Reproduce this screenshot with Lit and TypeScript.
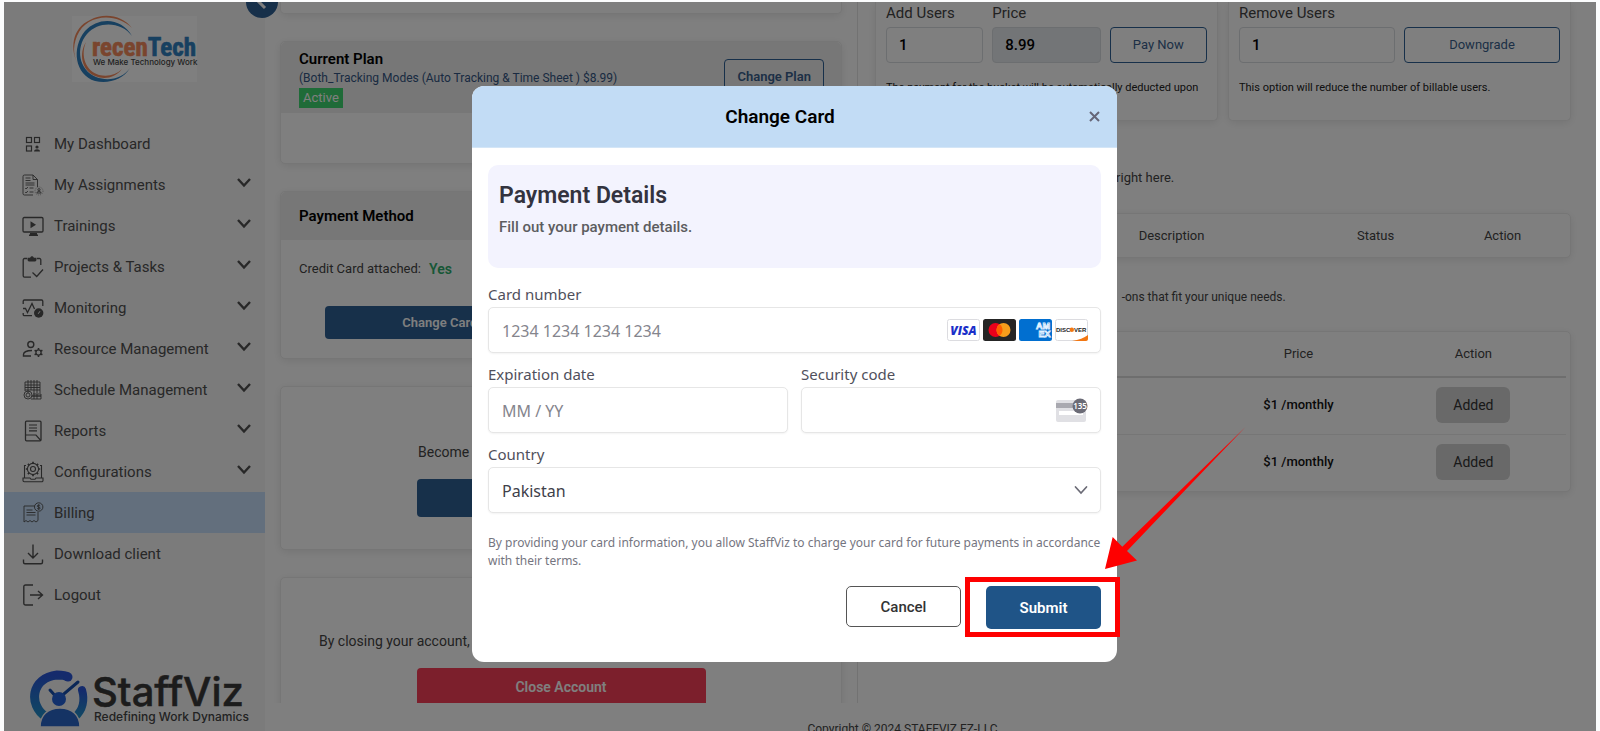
import { LitElement, html, css, svg, nothing } from "lit";
import { customElement, property } from "lit/decorators.js";

/* Sidebar glyphs, drawn on a 22 x 22 grid. */
const icons: Record<string, unknown> = {
  dashboard: svg`<g stroke-width="1.2"><rect x="4.5" y="4.5" width="5" height="5"/><rect x="12.5" y="4.5" width="5" height="5"/><rect x="4.5" y="13" width="5" height="5"/></g><circle cx="15" cy="14" r="1.6" fill="currentColor" stroke="none"/><path d="M12 18.5c0-3 6-3 6 0z" fill="currentColor" stroke="none"/>`,
  assignments: svg`<g stroke-width=".9"><path d="M11 21H2.5A1.5 1.5 0 0 1 1 19.500V2.500A1.500 1.500 0 0 1 2.500 1H11l4.500 4.500V13M11 1v4.500h4.500M3.500 4h5M3.500 6.500h5M3.500 9h9M3.500 11h9M7.500 14h4M7.500 18h4M3.200 14l1 1 1.600-2M3.200 18l1 1 1.600-2"/><circle cx="17" cy="17" r="4" stroke-dasharray="1 1" stroke-width=".5"/><circle cx="17" cy="15.700" r="1.100"/><path d="M14.800 19c.3-2 4.100-2 4.400 0z"/></g>`,
  trainings: svg`<rect x="1" y="2.500" width="20" height="14.500" rx="1.200" stroke-width="1.300"/><path d="M8.500 6.300v7l5.500-3.500z" fill="currentColor" stroke="none"/><path d="M8 18h7v1.500h1V21H7v-1.500h1z" fill="currentColor" stroke="none"/>`,
  projects: svg`<path d="M5 2.500H2.500A1.300 1.300 0 0 0 1.200 3.800v16a1.300 1.300 0 0 0 1.300 1.300H9M15 2.500h2.500a1.300 1.300 0 0 1 1.300 1.300V9M10.500 16.500l4.200 4 6.300-7" stroke-width="1.300"/><path d="M5.500 1.800h2.700c.4-2 3.200-2 3.600 0h2.700v1.700c0 1.600-1 2-2 2H7.500c-1 0-2-.6-2-2z" fill="currentColor" stroke="none"/>`,
  monitoring: svg`<path d="M1.200 7V4.200A1.200 1.200 0 0 1 2.400 3h17.200a1.200 1.200 0 0 1 1.200 1.200V9M1.200 16v1.500a1.200 1.200 0 0 0 1.200 1.200H10M1 11.500h2.500l2 4L10 6.500l2.500 5.500" stroke-width="1.300"/><circle cx="16.700" cy="16" r="4.700" fill="currentColor" stroke="none"/><path d="M16.200 16.800l1.800-2.600" stroke="#f7f7f7" stroke-width="1"/>`,
  resource: svg`<circle cx="8.800" cy="6.500" r="3" stroke-width="1.400"/><path d="M10 12.500c-5 0-8.500 1.500-8.500 4V18H9" stroke-width="1.400"/><circle cx="16.500" cy="14.500" r="2.600" stroke-width="1.300"/><path d="M16.500 10v1.800M16.500 17.200V19M12.600 12.200l1.600.9M18.800 15.900l1.600.9M12.600 16.800l1.600-.9M18.800 13.100l1.600-.9" stroke-width="1.600"/>`,
  schedule: svg`<g stroke-width=".9"><path d="M3 3h15v11M3 3v9M3 6h15M3 8.500h15M3 11h15M6 1v13M9 1v10M12 1v13M15 1v13"/><circle cx="6" cy="16" r="4"/><circle cx="6" cy="16" r="2"/><path d="M11 15l8 0v2h-9M10 17h9v3H9M12 14v6M15 15v5"/></g>`,
  reports: svg`<rect x="3.500" y="1.200" width="15.500" height="19.600" rx="1" stroke-width="1.300"/><path d="M7 5h8M7 8h8M7 10.800h8M3.500 15h10.500l4.800 5.500" stroke-width="1.200"/>`,
  configurations: svg`<g stroke-width="1.100"><path d="M4 4.500H2.500v12M18 4.500h1.500v12M1 17h7l1 1.300h4l1-1.300h7v2.500a1.200 1.200 0 0 1-1.200 1.200H2.200A1.200 1.200 0 0 1 1 19.500z"/><circle cx="11" cy="8" r="2.500"/><circle cx="11" cy="8" r="5.600"/><path d="M11 .8v2M11 13.200v2M3.800 8h2M16.200 8h2M5.900 2.900l1.400 1.400M14.700 11.700l1.400 1.400M16.100 2.900l-1.400 1.400M7.300 11.700l-1.400 1.400" stroke-width="1.700"/></g>`,
  billing: svg`<g stroke-width=".9"><path d="M13 4H2v16l2-1.500L6 20l2-1.500L10 20l2-1.500L14 20l2-1.500V10M4.500 8h6M4.500 10.500h9M4.500 13h9"/><circle cx="16.700" cy="5" r="4.200"/><path d="M18.200 3.800c-.6-1-3-.8-3 .3 0 1.200 3 .7 3 2 0 1.200-2.400 1.300-3 .2M16.700 2.300v5.500"/></g>`,
  download: svg`<path d="M11 1.500v13M6 10l5 5 5-5M1.500 16.500v2.700a1.500 1.500 0 0 0 1.500 1.500h16a1.500 1.500 0 0 0 1.500-1.500v-2.700" stroke-width="1.400"/>`,
  logout: svg`<path d="M11 1H3.500a1.700 1.700 0 0 0-1.700 1.700v16.600a1.700 1.700 0 0 0 1.700 1.700H11M8 11h12.500M16 7l4.500 4L16 15" stroke-width="1.400"/>`,
};

interface NavEntry {
  icon: string;
  label: string;
  expandable?: boolean;
  active?: boolean;
}

const navEntries: NavEntry[] = [
  { icon: "dashboard", label: "My Dashboard" },
  { icon: "assignments", label: "My Assignments", expandable: true },
  { icon: "trainings", label: "Trainings", expandable: true },
  { icon: "projects", label: "Projects & Tasks", expandable: true },
  { icon: "monitoring", label: "Monitoring", expandable: true },
  { icon: "resource", label: "Resource Management", expandable: true },
  { icon: "schedule", label: "Schedule Management", expandable: true },
  { icon: "reports", label: "Reports", expandable: true },
  { icon: "configurations", label: "Configurations", expandable: true },
  { icon: "billing", label: "Billing", active: true },
  { icon: "download", label: "Download client" },
  { icon: "logout", label: "Logout" },
];

@customElement("app-sidebar")
export class AppSidebar extends LitElement {
  static styles = css`
    :host {
      display: flex;
      flex-direction: column;
      position: relative;
      flex: 0 0 261px;
      background: #f7f7f7;
      color: #505050;
    }
    .brand {
      display: block;
      width: 125px;
      height: 66px;
      margin: 14px 0 41px 68px;
      overflow: visible;
    }
    .toggle {
      position: absolute;
      right: -13px;
      top: -16px;
      z-index: 1;
      width: 32px;
      height: 32px;
      padding: 0;
      border: 0;
      border-radius: 50%;
      background: #2e6094;
      color: #fff;
    }
    .nav {
      display: flex;
      flex-direction: column;
      flex: 1;
    }
    .item {
      display: grid;
      grid-template-columns: 22px 1fr 14px;
      align-items: center;
      gap: 10px;
      height: 41px;
      box-sizing: border-box;
      padding: 0 14px 0 18px;
      color: inherit;
      font-size: 15px;
      line-height: 20px;
      text-decoration: none;
    }
    .active {
      background: #c6defa;
    }
    .icon,
    .chevron {
      display: block;
      fill: none;
      stroke: currentColor;
    }
    .chevron {
      margin-bottom: 3px;
    }
    .product {
      display: block;
      width: 222px;
      height: 64px;
      margin: 0 0 0 25px;
    }
  `;

  render() {
    return html`
      <svg class="brand" viewBox="0 0 125 66" role="img" aria-label="recenTech">
        <rect width="125" height="66" fill="#fff" />
        <path d="M60 12C44-4 14-2 5 20c-5 12-3 22 2 30C-3 34 0 12 18 4c15-8 33-4 42 8z" fill="#f58a5c" />
        <path d="M60 20C50 6 27 4 15 18 3 32 7 54 24 61c13 5 27 1 34-9C51 64 36 68 23 65 3 59-1 32 13 15 27 0 50 2 60 20z" fill="#2f80c0" />
        <path d="M14 26c-6 14 0 29 13 33 9 2 17 0 23-6-7 9-18 11-27 7C9 54 7 37 14 26z" fill="#f58a5c" />
        <text x="20" y="40" font-family="'Liberation Sans Narrow','Roboto Condensed',Roboto,sans-serif" font-weight="700" font-size="25" fill="#f58a5c" stroke="#f58a5c" stroke-width=".6">recen<tspan fill="#2f80c0" stroke="#2f80c0">Tech</tspan></text>
        <text x="21" y="49" font-family="Inter,sans-serif" font-weight="500" font-size="8" fill="#444">We Make Technology Work</text>
      </svg>
      <button class="toggle" type="button" aria-label="Collapse menu">
        <svg width="32" height="32" viewBox="0 0 32 32" fill="none" stroke="#fff" stroke-width="3"><path d="M19 10l-6 6 6 6" /></svg>
      </button>
      <nav class="nav">
        ${navEntries.map(
          (entry) => html`
            <a class="item ${entry.active ? "active" : ""}" href="#">
              <svg class="icon" width="22" height="22" viewBox="0 0 22 22">${icons[entry.icon]}</svg>
              <span>${entry.label}</span>
              ${entry.expandable
                ? html`<svg class="chevron" width="14" height="10" viewBox="0 0 14 10"><path d="M1 1L7 7.500l6-6.500" stroke-width="2.400" /></svg>`
                : nothing}
            </a>
          `
        )}
      </nav>
      <svg class="product" viewBox="0 0 222 64" role="img" aria-label="StaffViz">
        <defs>
          <linearGradient id="ring" x1="0" y1="0" x2="0" y2="1">
            <stop offset="0" stop-color="#2a56d8" />
            <stop offset="1" stop-color="#2290c8" />
          </linearGradient>
        </defs>
        <path d="M17 50C-1 38 2 11 28 8c5 0 8 0 11 2" fill="none" stroke="url(#ring)" stroke-width="9" />
        <circle cx="39" cy="10" r="4.500" fill="#2a56d8" />
        <path d="M53 23c3 10 1 20-7 27" fill="none" stroke="url(#ring)" stroke-width="8" stroke-linecap="round" />
        <path d="M21 23l8 9L49 15" fill="none" stroke="#174fae" stroke-width="3" stroke-linecap="round" />
        <circle cx="30" cy="32" r="7" fill="#2563d8" />
        <path d="M11 60c0-12 8-19 20-19s20 7 20 19z" fill="#2a66c8" stroke="#f7f7f7" stroke-width="1.500" />
        <text x="63" y="39" font-family="Inter,sans-serif" font-weight="500" font-size="40" fill="#383838" stroke="#383838" stroke-width=".5">StaffViz</text>
        <text x="65" y="54" font-family="Inter,sans-serif" font-weight="500" font-size="12" fill="#444">Redefining Work Dynamics</text>
      </svg>
    `;
  }
}

@customElement("billing-page")
export class BillingPage extends LitElement {
  static styles = css`
    :host {
      display: flex;
      flex-direction: column;
      flex: 1;
      min-width: 0;
      background: #fff;
      color: #444;
      font-size: 13px;
      line-height: 18px;
    }
    .columns {
      flex: 1;
      min-height: 0;
      display: grid;
      grid-template-columns: 593fr 738fr;
      overflow: hidden;
    }
    .left {
      display: flex;
      flex-direction: column;
      gap: 27px;
      padding: 0 15px;
      border-right: 1px solid #e4e4e4;
    }
    .right {
      padding: 0 25px 0 17px;
    }
    .card {
      background: #fff;
      border: 1px solid #ececec;
      border-radius: 5px;
      box-sizing: border-box;
      box-shadow: 0 2px 8px rgba(0, 0, 0, 0.09);
      flex: none;
    }
    .stub {
      height: 12px;
      border-top: 0;
      border-radius: 0 0 5px 5px;
    }
    .plan {
      height: 123px;
    }
    .method {
      height: 168px;
    }
    .head {
      display: flex;
      justify-content: space-between;
      align-items: flex-start;
      background: #eee;
      padding: 7px 17px 5px 18px;
      border-radius: 5px 5px 0 0;
    }
    .method .head {
      padding: 14px 18px;
    }
    .title {
      margin: 0;
      color: #000;
      font-size: 15px;
      line-height: 20px;
      font-weight: 600;
    }
    .summary {
      margin: 0;
      color: #345684;
      font-size: 12px;
      line-height: 19px;
    }
    .badge {
      display: inline-block;
      background: #3ed670;
      color: #fff;
      font-size: 13px;
      line-height: 20px;
      padding: 0 4px;
    }
    .outline {
      background: transparent;
      border: 1px solid #2e6094;
      border-radius: 4px;
      color: #3a5f8c;
      font: 400 13px/18px Roboto, sans-serif;
      height: 36px;
      padding: 0 12px;
    }
    .strong {
      font-size: 13px;
      font-weight: 600;
      margin-top: 10px;
    }
    .attached {
      display: flex;
      gap: 8px;
      margin: 0;
      padding: 20px 18px 28px;
    }
    .yes {
      color: #2fae6c;
      font-size: 14px;
      font-weight: 600;
    }
    .solid {
      display: block;
      height: 38px;
      width: 289px;
      margin: 0 auto;
      border: 0;
      border-radius: 4px;
      background: #2e6094;
      color: #fff;
      font: 600 14px/18px Roboto, sans-serif;
    }
    .method .solid {
      width: 41%;
      height: 33px;
      margin: 0 44px;
      font-size: 13px;
    }
    .danger {
      background: #f83e58;
    }
    .partner {
      height: 164px;
      padding-top: 55px;
    }
    .closing {
      height: 164px;
      padding-top: 53px;
    }
    .note {
      margin: 0 0 17px;
      padding-left: 38px;
      font-size: 14px;
      line-height: 20px;
    }
    .partner .note {
      padding-left: 137px;
    }
    .users {
      display: grid;
      grid-template-columns: 1fr 1fr;
      gap: 10px;
    }
    .box {
      height: 119px;
      border-top: 0;
      padding: 0 10px;
      border-radius: 0 0 5px 5px;
    }
    .fields {
      display: grid;
      grid-template-columns: 97fr 108fr 97fr;
      gap: 9px;
      align-items: end;
    }
    .pair {
      grid-template-columns: 1fr 1fr;
    }
    .field {
      display: grid;
      gap: 4px;
      padding-top: 1px;
      font-size: 15px;
      line-height: 20px;
      min-width: 0;
    }
    .input {
      width: 100%;
      height: 36px;
      box-sizing: border-box;
      border: 1px solid #d8dce0;
      border-radius: 4px;
      background: #fff;
      padding: 0 12px;
      color: #000;
      font: 500 15px/20px Roboto, sans-serif;
    }
    .input[readonly] {
      background: #e6eaee;
    }
    .hint {
      margin: 17px 0 0;
      color: #222;
      font-size: 11px;
      line-height: 16px;
    }
    .lead {
      margin: 48px 0 0;
      width: 43%;
      text-align: right;
    }
    .wide {
      width: 59%;
      margin-top: 30px;
      font-size: 12px;
    }
    .panel {
      padding: 0 4px;
      margin-top: 26px;
    }
    .addons {
      margin-top: 25px;
    }
    .table {
      width: 100%;
      border-collapse: collapse;
      table-layout: fixed;
      text-align: center;
    }
    .table th {
      height: 43px;
      padding: 0;
      font-weight: 400;
      box-sizing: border-box;
    }
    .addons th {
      border-bottom: 2px solid #dcdcdc;
      height: 45px;
    }
    .table td {
      height: 57px;
      padding: 0 0 1px;
      box-sizing: border-box;
      border-bottom: 1px solid #ececec;
      color: #111;
      font-weight: 500;
    }
    .table tr:last-child td {
      border-bottom: 0;
    }
    .c22 {
      width: 22%;
    }
    .c41 {
      width: 41%;
    }
    .c49 {
      width: 49%;
    }
    .c24 {
      width: 24%;
    }
    .added {
      width: 74px;
      height: 36px;
      border: 0;
      border-radius: 6px;
      background: #d2d2d2;
      color: #333;
      font: 400 14px/18px Roboto, sans-serif;
    }
    .footer {
      flex: none;
      height: 28px;
      box-sizing: border-box;
      padding: 17px 56px 0 0;
      overflow: hidden;
      text-align: center;
      font-size: 12px;
    }
  `;

  render() {
    return html`
      <div class="columns">
        <div class="left">
          <section class="card stub"></section>
          <section class="card plan">
            <header class="head">
              <div>
                <h2 class="title">Current Plan</h2>
                <p class="summary">(Both_Tracking Modes (Auto Tracking &amp; Time Sheet ) $8.99)</p>
                <span class="badge">Active</span>
              </div>
              <button class="outline strong" type="button">Change Plan</button>
            </header>
          </section>
          <section class="card method">
            <header class="head"><h2 class="title">Payment Method</h2></header>
            <p class="attached"><span>Credit Card attached:</span><span class="yes">Yes</span></p>
            <button class="solid" type="button">Change Card</button>
          </section>
          <section class="card partner">
            <p class="note">Become</p>
            <button class="solid" type="button" aria-label="Become a partner"></button>
          </section>
          <section class="card closing">
            <p class="note">By closing your account, you</p>
            <button class="solid danger" type="button">Close Account</button>
          </section>
        </div>
        <div class="right">
          <div class="users">
            <section class="card box">
              <div class="fields">
                <label class="field">Add Users<input class="input" type="text" value="1" /></label>
                <label class="field">Price<input class="input" type="text" value="8.99" readonly /></label>
                <button class="outline" type="button">Pay Now</button>
              </div>
              <p class="hint">The payment for the bucket will be automatically deducted upon</p>
            </section>
            <section class="card box">
              <div class="fields pair">
                <label class="field">Remove Users<input class="input" type="text" value="1" /></label>
                <button class="outline" type="button">Downgrade</button>
              </div>
              <p class="hint">This option will reduce the number of billable users.</p>
            </section>
          </div>
          <p class="lead">right here.</p>
          <section class="card panel">
            <table class="table">
              <thead>
                <tr><th class="c22"></th><th class="c41">Description</th><th>Status</th><th>Action</th></tr>
              </thead>
            </table>
          </section>
          <p class="lead wide">-ons that fit your unique needs.</p>
          <section class="card panel addons">
            <table class="table">
              <thead>
                <tr><th class="c49"></th><th class="c24">Price</th><th>Action</th></tr>
              </thead>
              <tbody>
                ${[1, 2].map(
                  () => html`<tr>
                    <td></td>
                    <td>$1 /monthly</td>
                    <td><button class="added" type="button">Added</button></td>
                  </tr>`
                )}
              </tbody>
            </table>
          </section>
        </div>
      </div>
      <footer class="footer">Copyright © 2024 STAFFVIZ FZ-LLC</footer>
    `;
  }
}

@customElement("card-brands")
export class CardBrands extends LitElement {
  static styles = css`
    :host {
      display: flex;
      gap: 3px;
    }
    .brand {
      display: block;
    }
  `;

  render() {
    return html`
      <svg class="brand" width="33" height="22" viewBox="0 0 33 22" role="img" aria-label="Visa">
        <rect x=".5" y=".5" width="32" height="21" rx="2" fill="#fff" stroke="#dcdce0" />
        <text x="16.500" y="15.500" text-anchor="middle" font-family="'Open Sans',sans-serif" font-weight="800" font-style="italic" font-size="12" fill="#1a2fc9">VISA</text>
      </svg>
      <svg class="brand" width="33" height="22" viewBox="0 0 33 22" role="img" aria-label="Mastercard">
        <rect width="33" height="22" rx="2.500" fill="#252525" />
        <circle cx="12.500" cy="11" r="7" fill="#eb001b" />
        <circle cx="20.500" cy="11" r="7" fill="#f79e1b" />
        <path d="M16.500 5.250a7 7 0 0 1 0 11.500 7 7 0 0 1 0-11.500z" fill="#ff5f00" />
      </svg>
      <svg class="brand" width="33" height="22" viewBox="0 0 33 22" role="img" aria-label="American Express">
        <rect width="33" height="22" rx="2.500" fill="#016fd0" />
        <g font-family="'Liberation Sans',sans-serif" font-weight="700" font-size="9" fill="none" stroke="#e4f2ff" stroke-width=".9">
          <text x="17" y="10">AM</text>
          <text x="19.500" y="18">EX</text>
        </g>
      </svg>
      <svg class="brand" width="33" height="22" viewBox="0 0 33 22" role="img" aria-label="Discover">
        <rect x=".5" y=".5" width="32" height="21" rx="2" fill="#fff" stroke="#dcdce0" />
        <path d="M17 22c7-1 12-3 16-6v4a2 2 0 0 1-2 2z" fill="#f27712" />
        <g font-family="'Liberation Sans',sans-serif" font-weight="700" font-size="6" fill="#222">
          <text x="1" y="13">DISC</text>
          <text x="19" y="13">VER</text>
        </g>
        <circle cx="16.800" cy="10.800" r="2.200" fill="#f27712" />
      </svg>
    `;
  }
}

@customElement("change-card-dialog")
export class ChangeCardDialog extends LitElement {
  @property() country = "Pakistan";

  static styles = css`
    :host {
      display: block;
      position: relative;
      width: 645px;
      max-width: 100%;
      height: max-content;
      background: #fff;
      border-radius: 12px;
      font-family: "Noto Sans", "Open Sans", sans-serif;
      color: #50505c;
    }
    .head {
      display: flex;
      align-items: center;
      height: 62px;
      box-sizing: border-box;
      padding: 1px 15px 0 17px;
      border-bottom: 1px solid #d4e6f7;
      border-radius: 12px 12px 0 0;
      background: #c2dcf5;
      font-family: Roboto, sans-serif;
    }
    .title {
      flex: 1;
      margin: 0;
      color: #000;
      font-size: 19px;
      line-height: 24px;
      font-weight: 600;
      text-align: center;
    }
    .close {
      width: 31px;
      height: 31px;
      padding: 0 0 0 16px;
      border: 0;
      background: none;
      color: #667;
    }
    .body {
      padding: 17px 16px 33px;
    }
    .intro {
      height: 103px;
      box-sizing: border-box;
      padding: 17px 11px;
      border-radius: 10px;
      background: #f3f3fe;
      font-family: Roboto, sans-serif;
    }
    .heading {
      margin: 0;
      color: #33333f;
      font-size: 23px;
      line-height: 28px;
      font-weight: 600;
    }
    .sub {
      margin: 7px 0 0;
      color: #5c5c60;
      font-size: 15px;
      line-height: 20px;
      font-weight: 500;
    }
    .form {
      display: grid;
      grid-template-columns: 1fr 1fr;
      gap: 10px 13px;
      margin-top: 15px;
    }
    .field {
      display: grid;
      gap: 2px;
      font-size: 15px;
      line-height: 22px;
    }
    .full {
      grid-column: 1 / -1;
    }
    .box {
      display: flex;
      align-items: center;
      height: 46px;
      box-sizing: border-box;
      padding: 0 12px 0 0;
      border: 1px solid #e6e6e6;
      border-radius: 5px;
      background: #fff;
      box-shadow: 0 1px 2px rgba(0, 0, 0, 0.05);
    }
    .control {
      flex: 1;
      min-width: 0;
      height: 44px;
      box-sizing: border-box;
      border: 0;
      padding: 2px 0 0 13px;
      background: transparent;
      outline: 0;
      appearance: none;
      color: #40404a;
      font: 400 16px/22px "Noto Sans", "Open Sans", sans-serif;
    }
    .control::placeholder {
      color: #85858d;
      opacity: 1;
    }
    .terms {
      margin: 21px 0 16px;
      color: #75757f;
      font-size: 12px;
      line-height: 18px;
    }
    .actions {
      display: flex;
      justify-content: flex-end;
      align-items: flex-start;
      gap: 25px;
    }
    .cancel,
    .submit {
      width: 115px;
      height: 41px;
      border: 1px solid #555;
      border-radius: 5px;
      background: #fff;
      color: #333;
      font: 500 15px/20px Roboto, sans-serif;
    }
    .submit {
      display: block;
      height: 43px;
      border: 0;
      background: #1f5487;
      color: #fff;
      font-weight: 600;
    }
    .target {
      position: relative;
    }
    .mark {
      position: absolute;
      inset: -9px -19px -8px -21px;
      border: 5px solid #fe0000;
      pointer-events: none;
    }
    .arrow {
      position: absolute;
      left: 119px;
      bottom: 59px;
      width: 141px;
      height: 143px;
      pointer-events: none;
    }
  `;

  render() {
    return html`
      <header class="head">
        <h1 class="title">Change Card</h1>
        <button class="close" type="button" aria-label="Close">
          <svg width="11" height="11" viewBox="0 0 11 11" fill="none" stroke="currentColor" stroke-width="2"><path d="M1 1l9 9M10 1l-9 9" /></svg>
        </button>
      </header>
      <div class="body">
        <section class="intro">
          <h2 class="heading">Payment Details</h2>
          <p class="sub">Fill out your payment details.</p>
        </section>
        <div class="form">
          <label class="field full">
            Card number
            <span class="box">
              <input class="control" type="text" placeholder="1234 1234 1234 1234" />
              <card-brands></card-brands>
            </span>
          </label>
          <label class="field">
            Expiration date
            <span class="box"><input class="control" type="text" placeholder="MM / YY" /></span>
          </label>
          <label class="field">
            Security code
            <span class="box">
              <input class="control" type="text" />
              <svg width="32" height="26" viewBox="0 0 32 26" aria-hidden="true">
                <rect x="0" y="3" width="30" height="22" rx="2" fill="#e0e0e4" />
                <path d="M0 6h30v5H0z" fill="#a9a9b0" />
                <rect x="3" y="14" width="24" height="4" fill="#fff" />
                <circle cx="24" cy="9" r="7.500" fill="#6b6b76" />
                <text x="24" y="12" text-anchor="middle" font-family="'Noto Sans',sans-serif" font-weight="600" font-size="8" fill="#fff">135</text>
              </svg>
            </span>
          </label>
          <label class="field full">
            Country
            <span class="box">
              <select class="control">
                <option selected>${this.country}</option>
              </select>
              <svg width="14" height="10" viewBox="0 0 14 10" fill="none" stroke="#6b6b76" stroke-width="1.700" stroke-linecap="round" aria-hidden="true"><path d="M1.500 2L7 8l5.500-6" /></svg>
            </span>
          </label>
        </div>
        <p class="terms">
          By providing your card information, you allow StaffViz to charge your card for future payments in accordance with their terms.
        </p>
        <div class="actions">
          <button class="cancel" type="button">Cancel</button>
          <div class="target">
            <button class="submit" type="submit">Submit</button>
            <div class="mark"></div>
            <svg class="arrow" viewBox="0 0 141 143" aria-hidden="true">
              <path d="M0 142L7.700 110 17.300 119.800 140.500 0 22 124 32 133.500z" fill="#fe0000" />
            </svg>
          </div>
        </div>
      </div>
    `;
  }
}

@customElement("app-root")
export class AppRoot extends LitElement {
  static styles = css`
    :host {
      display: block;
      height: 100vh;
      box-sizing: border-box;
      padding: 2px 4px 0;
      overflow: hidden;
      background: #fbfcfd;
      font-family: Roboto, sans-serif;
    }
    .frame {
      position: relative;
      display: flex;
      height: 100%;
      overflow: hidden;
    }
    .backdrop {
      position: absolute;
      inset: 0;
      z-index: 2;
      display: flex;
      justify-content: center;
      align-items: flex-start;
      padding: 84px 11px 0 0;
      background: rgba(0, 0, 0, 0.5);
    }
  `;

  render() {
    return html`
      <div class="frame">
        <app-sidebar></app-sidebar>
        <billing-page></billing-page>
        <div class="backdrop"><change-card-dialog></change-card-dialog></div>
      </div>
    `;
  }
}
